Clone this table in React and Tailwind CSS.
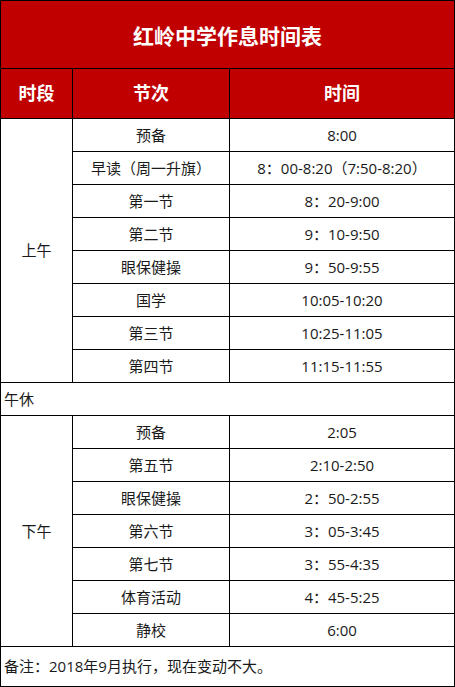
const morning = [
  ['预备', '8:00'],
  ['早读（周一升旗）', '8：00-8:20（7:50-8:20）'],
  ['第一节', '8：20-9:00'],
  ['第二节', '9：10-9:50'],
  ['眼保健操', '9：50-9:55'],
  ['国学', '10:05-10:20'],
  ['第三节', '10:25-11:05'],
  ['第四节', '11:15-11:55'],
];

const afternoon = [
  ['预备', '2:05'],
  ['第五节', '2:10-2:50'],
  ['眼保健操', '2：50-2:55'],
  ['第六节', '3：05-3:45'],
  ['第七节', '3：55-4:35'],
  ['体育活动', '4：45-5:25'],
  ['静校', '6:00'],
];

const cell = 'bg-white flex items-center justify-center text-[15px] text-[#1a1a1a]';

function Block({ label, rows, span }) {
  return (
    <>
      <div className={`${cell} ${span}`} style={{ gridColumn: 1 }}>
        {label}
      </div>
      {rows.map(([name, time]) => (
        <div key={name + time} className="contents">
          <div className={cell} style={{ gridColumn: 2 }}>{name}</div>
          <div className={cell} style={{ gridColumn: 3 }}>{time}</div>
        </div>
      ))}
    </>
  );
}

export default function App() {
  return (
    <div
      className="w-[455px] h-[687px] bg-black p-px grid gap-px grid-cols-[71px_156px_224px] grid-rows-[67px_49px_repeat(16,32px)_39px]"
      style={{ fontFamily: '"Open Sans", "Noto Sans CJK SC", sans-serif' }}
    >
      <div className="col-span-3 bg-[#c00000] text-white font-bold text-[21px] flex items-center justify-center pt-[5px]">
        红岭中学作息时间表
      </div>
      <div className="bg-[#c00000] text-white font-bold text-[18px] flex items-center justify-center">时段</div>
      <div className="bg-[#c00000] text-white font-bold text-[18px] flex items-center justify-center">节次</div>
      <div className="bg-[#c00000] text-white font-bold text-[18px] flex items-center justify-center">时间</div>

      <Block label="上午" rows={morning} span="row-span-8" />

      <div className="col-span-3 bg-white flex items-center pl-[3px] text-[15px] text-[#1a1a1a]">午休</div>

      <Block label="下午" rows={afternoon} span="row-span-7" />

      <div className="col-span-3 bg-white flex items-center pl-[3px] text-[15px] text-[#1a1a1a]">
        备注：2018年9月执行，现在变动不大。
      </div>
    </div>
  );
}
